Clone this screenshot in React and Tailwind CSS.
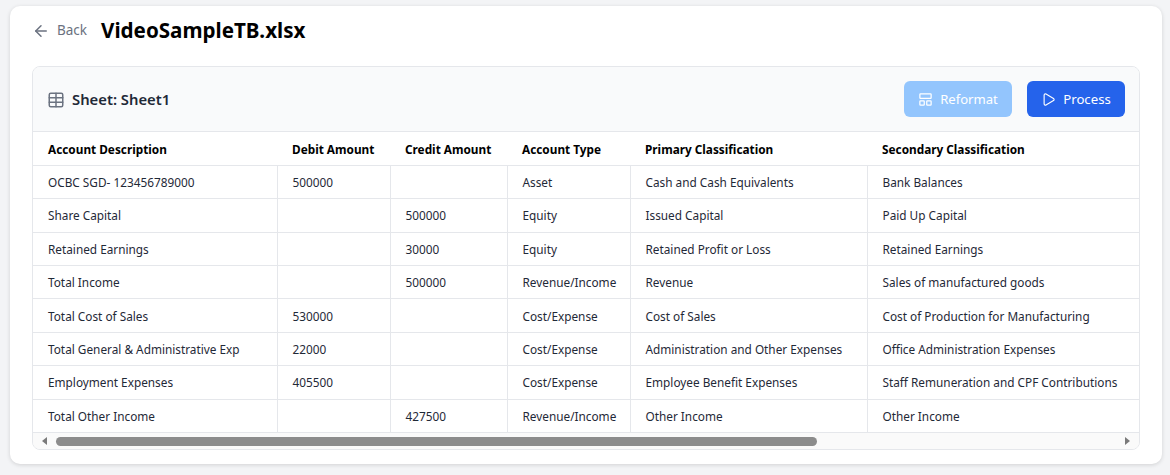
import React from "react";
import { ArrowLeft, Table, LayoutPanelTop, Play } from "lucide-react";

const cols = ["w-[244px]", "w-[113px]", "w-[117px]", "w-[123px]", "w-[237px]", "w-[300px]"];
const headers = ["Account Description", "Debit Amount", "Credit Amount", "Account Type", "Primary Classification", "Secondary Classification"];
const rows = [
  ["OCBC SGD- 123456789000", "500000", "", "Asset", "Cash and Cash Equivalents", "Bank Balances"],
  ["Share Capital", "", "500000", "Equity", "Issued Capital", "Paid Up Capital"],
  ["Retained Earnings", "", "30000", "Equity", "Retained Profit or Loss", "Retained Earnings"],
  ["Total Income", "", "500000", "Revenue/Income", "Revenue", "Sales of manufactured goods"],
  ["Total Cost of Sales", "530000", "", "Cost/Expense", "Cost of Sales", "Cost of Production for Manufacturing"],
  ["Total General & Administrative Exp", "22000", "", "Cost/Expense", "Administration and Other Expenses", "Office Administration Expenses"],
  ["Employment Expenses", "405500", "", "Cost/Expense", "Employee Benefit Expenses", "Staff Remuneration and CPF Contributions"],
  ["Total Other Income", "", "427500", "Revenue/Income", "Other Income", "Other Income"],
];

export default function App() {
  return (
    <div className="h-[475px] bg-[#f3f4f6] pt-[6px] pl-[10px] pr-[8px] pb-[11px] font-['Noto_Sans','Open_Sans',sans-serif] overflow-hidden">
      <div className="h-full rounded-[10px] bg-white px-[22px] shadow-[0_1px_4px_rgba(0,0,0,0.14)] flex flex-col">
        <div className="h-[60px] flex items-start pt-[10px] gap-[14px] shrink-0">
          <div className="flex items-center gap-[7px] h-[29px] text-[#6b7280]">
            <ArrowLeft size={18} strokeWidth={2} />
            <span className="text-[13.5px]">Back</span>
          </div>
          <h1 className="text-[20.6px] leading-[29px] font-bold text-black">VideoSampleTB.xlsx</h1>
        </div>
        <div className="h-[384px] w-[1108px] rounded-[8px] border border-[#e5e7eb] overflow-hidden flex flex-col">
          <div className="h-[65px] shrink-0 bg-[#f9fafb] border-b border-[#e5e7eb] flex items-center justify-between pl-[14px] pr-[14px]">
            <div className="flex items-center gap-[7px] pt-[1px]">
              <Table size={18} className="text-[#6b7280]" strokeWidth={2} />
              <span className="text-[14.8px] font-semibold text-[#1f2937]">Sheet: Sheet1</span>
            </div>
            <div className="flex items-center gap-[15px]">
              <button className="h-[36px] w-[108px] rounded-[6px] bg-[#93c5fd] text-white text-[13.1px] font-normal flex items-center justify-center gap-[7px] pt-[1px]">
                <LayoutPanelTop size={15} strokeWidth={2} />
                Reformat
              </button>
              <button className="h-[36px] w-[98px] rounded-[6px] bg-[#2563eb] text-white text-[13.2px] font-normal flex items-center justify-center gap-[7px] pt-[1px]">
                <Play size={15} strokeWidth={1.8} />
                Process
              </button>
            </div>
          </div>
          <div className="flex-1 min-h-0 overflow-hidden">
            <table className="table-fixed w-[1134px] border-collapse text-[11.8px] text-[#1f2937]">
              <colgroup>
                {cols.map((c, i) => <col key={i} className={c} />)}
              </colgroup>
              <thead>
                <tr className="h-[33.4px] border-b border-[#e5e7eb]">
                  {headers.map((h) => (
                    <th key={h} className="px-[15px] pt-[2px] text-left font-bold text-black whitespace-nowrap">{h}</th>
                  ))}
                </tr>
              </thead>
              <tbody>
                {rows.map((r, i) => (
                  <tr key={i} className="h-[33.4px] border-b border-[#e5e7eb] last:border-b-0">
                    {r.map((c, j) => (
                      <td key={j} className="px-[15px] pt-[1.5px] whitespace-nowrap border-r border-[#e5e7eb] last:border-r-0">{c}</td>
                    ))}
                  </tr>
                ))}
              </tbody>
            </table>
          </div>
          <div className="h-[17px] shrink-0 bg-[#fafafa] border-t border-[#e5e7eb] flex items-center pl-[9px] pr-[9px]">
            <svg width="5" height="8" viewBox="0 0 5 8" className="shrink-0"><path d="M5 0v8L0 4z" fill="#7a7a7a" /></svg>
            <div className="ml-[9px] w-[761px] h-[9px] rounded-full bg-[#8c8c8c]" />
            <svg width="5" height="8" viewBox="0 0 5 8" className="shrink-0 ml-auto"><path d="M0 0v8l5-4z" fill="#7a7a7a" /></svg>
          </div>
        </div>
      </div>
    </div>
  );
}
